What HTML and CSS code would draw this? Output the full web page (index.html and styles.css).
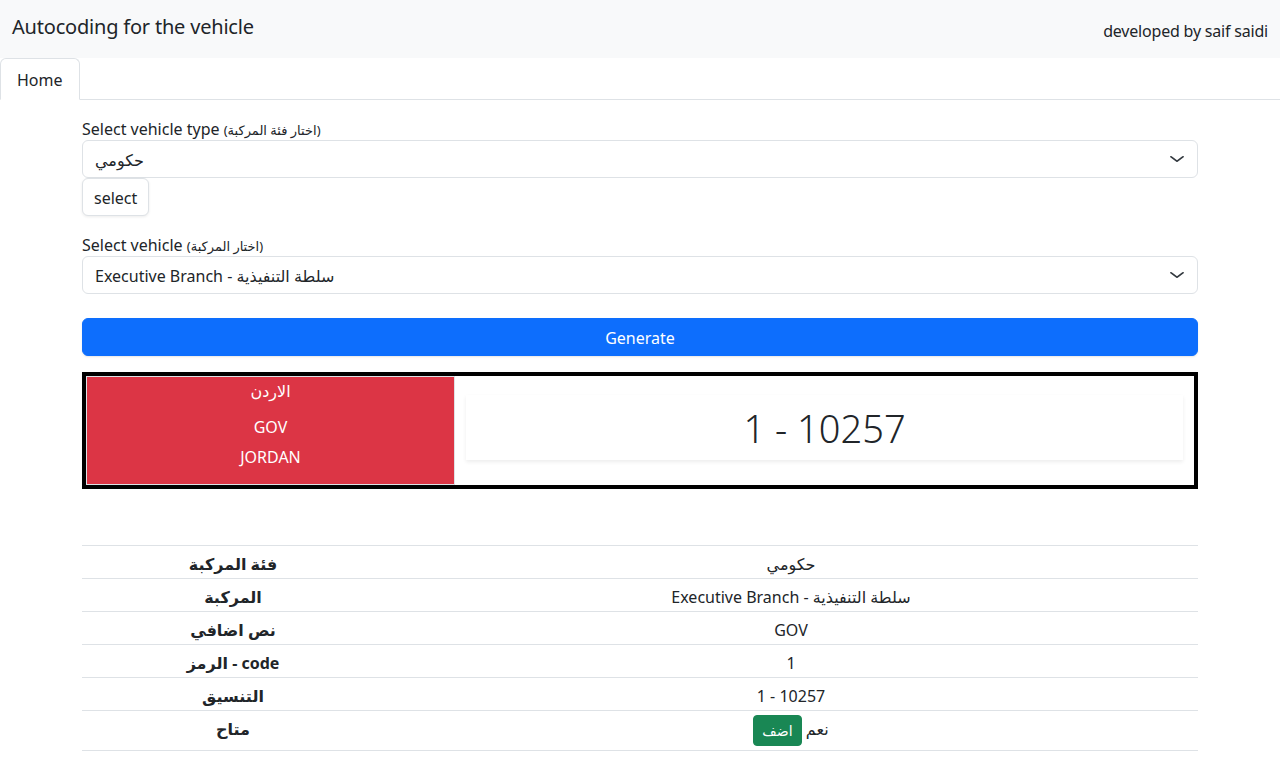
FILE: index.html
```html
<!DOCTYPE html>
<html lang="en">
<head>
<meta charset="utf-8">
<title>Autocoding for the vehicle</title>
<link rel="stylesheet" href="styles.css">
</head>
<body>
<header class="topbar">
  <div class="brand">Autocoding for the vehicle</div>
  <div class="credit">developed by saif saidi</div>
</header>
<nav class="tabs">
  <a class="tab active" href="#">Home</a>
</nav>
<main class="container">
  <div class="field">
    <label class="form-label">Select vehicle type <small>(اختار فئة المركبة)</small></label>
    <div class="select"><span>حكومي</span><svg class="chev" width="16" height="12" viewBox="0 0 16 16" preserveAspectRatio="none"><path d="m2 5 6 6 6-6" fill="none" stroke="#343a40" stroke-width="2" stroke-linecap="round" stroke-linejoin="round"/></svg></div>
    <button class="btn-select">select</button>
  </div>
  <div class="field field2">
    <label class="form-label">Select vehicle <small>(اختار المركبة)</small></label>
    <div class="select"><span>Executive Branch - سلطة التنفيذية</span><svg class="chev" width="16" height="12" viewBox="0 0 16 16" preserveAspectRatio="none"><path d="m2 5 6 6 6-6" fill="none" stroke="#343a40" stroke-width="2" stroke-linecap="round" stroke-linejoin="round"/></svg></div>
  </div>
  <button class="btn-generate">Generate</button>
  <div class="plate">
    <div class="plate-left">
      <div class="pl-ar">الاردن</div>
      <div class="pl-gov">GOV</div>
      <div class="pl-jo">JORDAN</div>
    </div>
    <div class="plate-right">
      <div class="plate-card">1 - 10257</div>
    </div>
  </div>
  <table class="info">
    <tbody>
      <tr><th>فئة المركبة</th><td>حكومي</td></tr>
      <tr><th>المركبة</th><td>Executive Branch - سلطة التنفيذية</td></tr>
      <tr><th>نص اضافي</th><td>GOV</td></tr>
      <tr><th>الرمز - code</th><td>1</td></tr>
      <tr><th>التنسيق</th><td>1 - 10257</td></tr>
      <tr class="last"><th>متاح</th><td><button class="btn-add">اضف</button> نعم</td></tr>
    </tbody>
  </table>
</main>
</body>
</html>
```

FILE: styles.css
```css
* { box-sizing: border-box; }
body {
  margin: 0;
  font-family: "Noto Sans", "DejaVu Sans", sans-serif;
  font-size: 16px;
  line-height: 1.5;
  color: #212529;
  background: #fff;
}
.topbar {
  height: 58px;
  background: #f8f9fa;
  display: flex;
  align-items: center;
  justify-content: space-between;
  padding: 0 12px;
}
.brand { font-size: 20px; line-height: 30px; margin-bottom: 4px; letter-spacing: -0.2px; }
.credit { font-size: 16px; line-height: 24px; margin-top: 4px; letter-spacing: -0.2px; }
.tabs {
  display: flex;
  border-bottom: 1px solid #dee2e6;
  height: 42px;
}
.tab {
  display: block;
  padding: 9px 16px 7px;
  color: #212529;
  text-decoration: none;
  border: 1px solid #dee2e6;
  border-bottom-color: #fff;
  border-radius: 6px 6px 0 0;
  height: 42px;
  line-height: 24px;
  background: #fff;
}
.container {
  width: 1116px;
  margin: 0 auto;
  padding-top: 18px;
}
.form-label { display: block; height: 22px; line-height: 22px; }
.form-label small { font-size: 13px; line-height: 1; }
.select {
  height: 38px;
  border: 1px solid #dee2e6;
  border-radius: 6px;
  display: flex;
  align-items: center;
  justify-content: space-between;
  padding: 2px 12px 0 12px;
}
.chev { width: 16px; height: 12px; margin-top: -2px; }
.btn-select {
  display: block;
  height: 38px;
  padding: 1px 11px 0;
  font: inherit;
  color: #212529;
  background: #fff;
  border: 1px solid #dee2e6;
  border-radius: 6px;
  box-shadow: 0 1px 3px rgba(0,0,0,0.08);
}
.field2 { margin-top: 18px; }
.btn-generate {
  display: block;
  width: 100%;
  height: 38px;
  margin-top: 24px;
  padding-top: 2px;
  background: #0d6efd;
  color: #fff;
  font: inherit;
  border: 1px solid #0d6efd;
  border-radius: 6px;
  box-shadow: 0 1px 2px rgba(0,0,0,0.1);
}
.plate {
  margin-top: 16px;
  height: 117px;
  border: 4px solid #000;
  display: flex;
}
.plate-left {
  width: 369px;
  background: #dc3545;
  border: 1px solid #dee2e6;
  color: #fff;
  text-align: center;
  padding-top: 2px;
}
.pl-ar { line-height: 24px; }
.pl-gov { margin-top: 12px; line-height: 24px; }
.pl-jo { margin-top: 6px; line-height: 24px; }
.plate-right {
  flex: 1;
  padding: 19px 11px 25px 11px;
}
.plate-card {
  height: 65px;
  background: #fff;
  box-shadow: 0 2px 4px rgba(0,0,0,0.075);
  text-align: center;
  font-size: 38px;
  font-weight: 300;
  line-height: 67px;
}
.info {
  width: 100%;
  margin-top: 56px;
  border-collapse: collapse;
}
.info tr { border-top: 1px solid #dee2e6; border-bottom: 1px solid #dee2e6; }
.info th, .info td {
  padding: 6px 4px 2px;
  text-align: center;
  line-height: 24px;
}
.info th { width: 302px; font-weight: 700; }
.info tr.last th, .info tr.last td { vertical-align: middle; padding: 4px; }
.info tr.last th { padding-top: 2px; padding-bottom: 6px; }
.btn-add {
  height: 31px;
  padding: 1px 8px 0;
  font: inherit;
  font-size: 14px;
  background: #198754;
  color: #fff;
  border: 1px solid #198754;
  border-radius: 4px;
  vertical-align: middle;
}
```
